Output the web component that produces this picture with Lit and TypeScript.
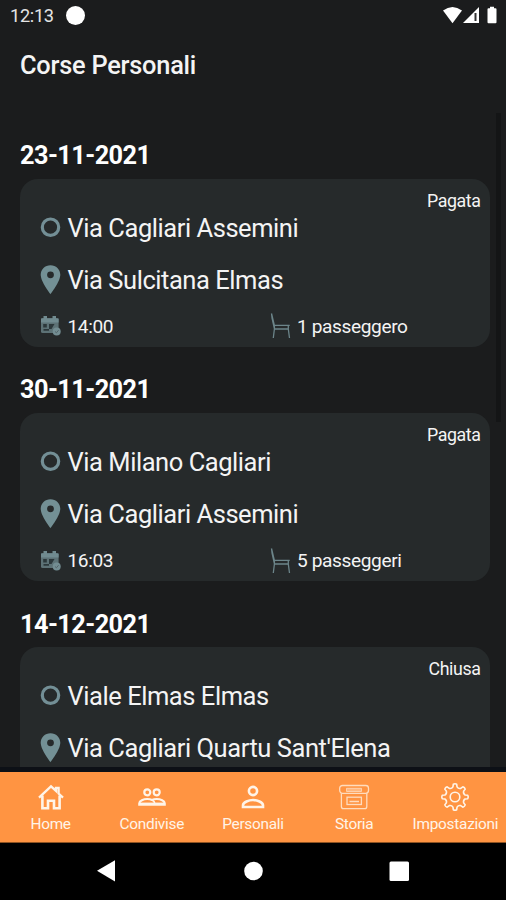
import { LitElement, html, css, svg, nothing } from "lit";
import { customElement, property } from "lit/decorators.js";

interface Ride {
  date: string;
  status: string;
  from: string;
  to: string;
  time?: string;
  seats?: string;
}

const rides: Ride[] = [
  { date: "23-11-2021", status: "Pagata", from: "Via Cagliari Assemini", to: "Via Sulcitana Elmas", time: "14:00", seats: "1 passeggero" },
  { date: "30-11-2021", status: "Pagata", from: "Via Milano Cagliari", to: "Via Cagliari Assemini", time: "16:03", seats: "5 passeggeri" },
  { date: "14-12-2021", status: "Chiusa", from: "Viale Elmas Elmas", to: "Via Cagliari Quartu Sant'Elena" },
];

const teeth = 8;
const gearPath = (() => {
  const pts: string[] = [];
  const at = (r: number, a: number) => `${(14 + r * Math.cos(a)).toFixed(2)} ${(14 + r * Math.sin(a)).toFixed(2)}`;
  for (let i = 0; i < teeth; i++) {
    const a = (i * 2 * Math.PI) / teeth;
    pts.push(`${i ? "L" : "M"}${at(12.9, a - 0.13)}Q${at(13.7, a)} ${at(12.9, a + 0.13)}`);
    pts.push(`L${at(10.3, a + 0.2)}Q${at(8.7, a + 0.39)} ${at(10.3, a + 0.585)}`);
  }
  return pts.join("") + "Z";
})();

const tabs = [
  {
    label: "Home",
    icon: svg`<path d="M2 14.6 14 3.400l5 4.500V4.800h2.600v5.800l4.400 4" fill="none" stroke="currentColor" stroke-width="2.300"/>
      <path d="M5.400 12.500V25.300h5.600v-7.600h6v7.600h5.600V12.500" fill="none" stroke="currentColor" stroke-width="2.600"/>`,
  },
  {
    label: "Condivise",
    icon: svg`<g fill="none" stroke="currentColor" stroke-width="2.200">
      <circle cx="9.300" cy="9.300" r="3"/><circle cx="18.700" cy="9.300" r="3"/>
      <path d="M1.300 21.600v-1.400c0-2.400 4.200-4.200 8-4.200 1.800 0 3.400.3 4.700.9 1.300-.6 2.900-.9 4.700-.9 3.800 0 8 1.800 8 4.200v1.400Z"/></g>
      <path d="M14 17c1.700.9 2.700 2.100 2.700 3.300v1" fill="none" stroke="currentColor" stroke-width="1.600"/>
      <path d="M1.300 20.500h25.400" stroke="currentColor" stroke-width="1.800"/>`,
  },
  {
    label: "Personali",
    icon: svg`<g fill="none" stroke="currentColor" stroke-width="2.600">
      <circle cx="14" cy="8" r="4.100"/><path d="M4 24v-1.700c0-3.200 6-5.300 10-5.300s10 2.100 10 5.300V24Z"/></g>`,
  },
  {
    label: "Storia",
    icon: svg`<g fill="none" stroke="currentColor" stroke-width="1.300" opacity=".75">
      <rect x="-.3" y="2.500" width="28.800" height="7.800" rx="2.800"/>
      <path d="M1.400 10.200v13.200q0 2.200 2.200 2.200h21q2.200 0 2.200-2.200V10.200"/>
      <path d="M6.500 5.300h15v3.200h-15Z" fill="currentColor" fill-opacity=".5" stroke-width=".8"/>
      <rect x="7" y="14.200" width="14.400" height="7.300"/><path d="M9.500 18.500h9.500" stroke-width="1.500"/></g>`,
  },
  {
    label: "Impostazioni",
    icon: svg`<g fill="none" stroke="currentColor" stroke-width="1.600" stroke-linejoin="round">
      <path d=${gearPath}/><circle cx="14" cy="14" r="4.800"/></g>`,
  },
];

@customElement("ride-card")
class RideCard extends LitElement {
  @property({ attribute: false }) ride!: Ride;

  static styles = css`
    :host { display: block; height: 234.3px; }
    .date { margin: 0; height: 39.5px; line-height: 33.4px; font-size: 25.3px; letter-spacing: -0.56px; font-weight: 700; color: #fff; }
    .card { box-sizing: border-box; height: 168px; border-radius: 18px; background: #262a2b; padding: 10px 9px 0 20px; display: flex; flex-direction: column; }
    .status { align-self: flex-end; font-size: 17.8px; letter-spacing: -0.4px; line-height: 23px; height: 22px; }
    .stop { display: flex; align-items: center; height: 52.2px; font-size: 25.5px; letter-spacing: -0.45px; white-space: nowrap; }
    .from { margin-top: -9px; }
    .stop svg, .meta svg { flex: none; display: block; overflow: visible; }
    .stop span { margin-left: 6.5px; }
    .meta { display: flex; align-items: center; height: 24px; margin-top: 8.6px; font-size: 19.1px; letter-spacing: -0.38px; }
    .time { width: 230px; }
    .time, .seats { display: flex; align-items: center; }
    .time span { margin-left: 6.5px; }
    .seats span { margin-left: 6px; }
  `;

  render() {
    const r = this.ride;
    return html`
      <h2 class="date">${r.date}</h2>
      <div class="card">
        <div class="status">${r.status}</div>
        <div class="stop from">
          <svg width="21" height="22" viewBox="0 0 21 22"><circle cx="10.5" cy="10.2" r="8.2" fill="none" stroke="#738f96" stroke-width="3.2"/></svg>
          <span>${r.from}</span>
        </div>
        <div class="stop">
          <svg width="21" height="30" viewBox="0 0 21 30"><path d="M10.5.2C5 .2.7 4.4.7 9.8c0 7 9.8 19.4 9.8 19.4s9.8-12.4 9.8-19.4C20.3 4.4 16 .2 10.5.2Zm0 13a3.4 3.4 0 1 1 0-6.8 3.4 3.4 0 0 1 0 6.8Z" fill="#739095"/></svg>
          <span>${r.to}</span>
        </div>
        ${r.time
          ? html`<div class="meta">
              <div class="time">
                <svg width="21" height="20" viewBox="0 0 21 20">
                  <path d="M2.500 2H17q1.600 0 1.600 1.600V17H2.500Q1 17 1 15.400V3.600Q1 2 2.500 2Z" fill="#5d7276"/>
                  <path d="M1 2.500h17.600v4H1Z" fill="#718b90"/>
                  <path d="M3.500 0h3.500v3.500H3.500ZM12.500 0H16v3.500h-3.500Z" fill="#718b90"/>
                  <path d="M3.200 8h3.600v3.500H3.200ZM9 8h5.500l-3 5H9ZM3.500 13h5.500v1.800H3.500Z" fill="#2c383b"/>
                  <circle cx="16.700" cy="15.500" r="4" fill="#738d92"/><path d="m15 15.500 1.400 1.300 2.200-2.600" fill="none" stroke="#53656a"/>
                </svg>
                <span>${r.time}</span>
              </div>
              <div class="seats">
                <svg width="21" height="26" viewBox="0 0 21 26"><path d="M1.500.5 4.400 12.500v3.500L3.300 25M1.500.5l.6 5 2.300 10M4.400 12.300h15.300M4.400 16h14.200M18.300 12.300V16l1.200 9" fill="none" stroke="#6c858a" stroke-width="1.300"/></svg>
                <span>${r.seats}</span>
              </div>
            </div>`
          : nothing}
      </div>
    `;
  }
}

@customElement("app-root")
class AppRoot extends LitElement {
  static styles = css`
    :host { display: flex; flex-direction: column; width: 506px; height: 900px; overflow: hidden; background: #1b1c1d; color: #f4f4f4; font-family: Roboto, sans-serif; }
    .status-bar { flex: none; height: 31px; display: flex; align-items: center; padding: 0 8px 0 10px; font-size: 18.2px; letter-spacing: -0.3px; color: #e4e4e4; }
    .dot { width: 19px; height: 19px; border-radius: 50%; background: #fff; margin-left: 12.5px; }
    .signals { margin-left: auto; display: block; }
    .title { flex: none; margin: 0; height: 69px; padding-left: 20px; line-height: 69px; font-size: 25.4px; letter-spacing: -0.25px; font-weight: 500; }
    .body { flex: none; box-sizing: border-box; height: 667px; overflow: hidden; padding: 39px 5px 0 20px; display: flex; justify-content: space-between; }
    .list { width: 469.5px; }
    .thumb { width: 5px; height: 309px; margin-top: -26px; background: #141516; }
    .tabs { flex: none; height: 70px; border-top: 5px solid #0d1016; border-bottom: 1px solid #8e5322; box-sizing: content-box; background: #ff9442; background-clip: padding-box; display: grid; grid-template-columns: repeat(5, 1fr); color: #fff4e8; }
    .tab { display: flex; flex-direction: column; align-items: center; padding-top: 11px; font-size: 15.4px; letter-spacing: -0.27px; line-height: 20px; }
    .tab svg { display: block; overflow: visible; margin-bottom: 3px; }
    .nav { flex: 1; background: #000; }
    .nav svg { display: block; }
  `;

  render() {
    return html`
      <div class="status-bar">
        <span>12:13</span><span class="dot"></span>
        <svg class="signals" width="56" height="20" viewBox="0 0 56 20" fill="#fff">
          <path d="M1 4.500Q10.500-2.500 20 4.500L10.500 17.300Z"/>
          <path d="M37 1v16H21Z"/><path d="M32.500 7v8h2V7Z" fill="#333"/>
          <path d="M48 .8h4v1.500h1.500q1 0 1 1V16.300q0 1-1 1h-7q-1 0-1-1V3.300q0-1 1-1H48Z"/>
        </svg>
      </div>
      <h1 class="title">Corse Personali</h1>
      <div class="body">
        <div class="list">${rides.map((r) => html`<ride-card .ride=${r}></ride-card>`)}</div>
        <div class="thumb"></div>
      </div>
      <div class="tabs">
        ${tabs.map((t) => html`<div class="tab"><svg width="28" height="28" viewBox="0 0 28 28">${t.icon}</svg><span>${t.label}</span></div>`)}
      </div>
      <div class="nav">
        <svg width="506" height="57" viewBox="0 0 506 57" fill="#fff">
          <path d="M97 27.800 115 17.200V38.400Z"/><circle cx="253.500" cy="28" r="9.300"/><rect x="389.500" y="18.500" width="19.500" height="19.500" rx="1.500"/>
        </svg>
      </div>
    `;
  }
}
